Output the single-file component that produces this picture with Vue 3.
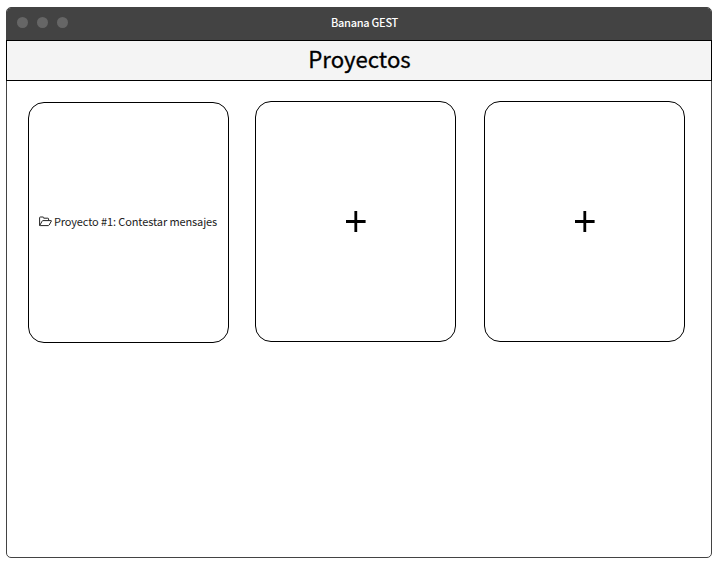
<script setup>
const dots = [1, 2, 3]
const projects = [
  { id: 1, name: 'Proyecto #1: Contestar mensajes' },
  { id: 2, name: null },
  { id: 3, name: null },
]
</script>

<template>
  <main class="window">
    <div class="titlebar">
      <div class="dots"><i v-for="d in dots" :key="d" class="dot"></i></div>
      <span class="app-name">Banana GEST</span>
    </div>
    <header class="heading"><h1>Proyectos</h1></header>
    <section class="cards">
      <article v-for="p in projects" :key="p.id" class="card">
        <div v-if="p.name" class="project">
          <svg class="folder" viewBox="0 0 13 11" width="13" height="11">
            <path d="M.6 9.5V1.7Q.6 1 1.3 1H4Q4.7 1 4.7 1.7V2.2H8.8Q9.6 2.2 9.6 3V4.6M.8 9.4 3.1 5.2Q3.4 4.6 4 4.6H12Q12.7 4.6 12.3 5.2L10.1 9.1Q9.7 9.6 9.2 9.6H1.3Q.6 9.6.6 9" />
          </svg>
          <span>{{ p.name }}</span>
        </div>
        <svg v-else class="plus" viewBox="0 0 20 21" width="20" height="21">
          <path d="M0 10.5H19.6M9.8 0V21" />
        </svg>
      </article>
    </section>
  </main>
</template>

<style>
body { background: #fff; }
</style>

<style scoped>
.window {
  box-sizing: border-box;
  width: 706px;
  height: 551px;
  margin: 7px 0 0 6px;
  border: 1px solid #434343;
  border-radius: 5px;
  background: #fff;
  color: #000;
  font-family: "Noto Sans CJK SC", "Noto Sans", sans-serif;
}
.titlebar {
  display: grid;
  grid-template-columns: 1fr auto 1fr;
  align-items: center;
  height: 32px;
  border-radius: 4px 4px 0 0;
  background: #434343;
}
.dots { display: flex; gap: 9px; padding: 0 0 4px 10px; }
.dot { width: 11px; height: 11px; border-radius: 50%; background: #666; }
.app-name {
  grid-column: 2;
  color: #fff;
  font-size: 11px;
  line-height: 16px;
  font-weight: 500;
  letter-spacing: -0.27px;
  padding: 0 0 4px 11px;
}
.heading {
  box-sizing: border-box;
  height: 41px;
  margin: 0 -1px;
  border: 1px solid #000;
  background: #f4f4f4;
  display: flex;
  justify-content: center;
  align-items: center;
}
h1 {
  margin: 0;
  padding: 0 0 5px 1px;
  font-size: 22.2px;
  line-height: 30px;
  font-weight: 400;
  -webkit-text-stroke: 0.3px #000;
}
.cards { display: flex; padding: 20px 0 0 21px; }
.card {
  box-sizing: border-box;
  width: 201px;
  height: 241px;
  border: 1px solid #000;
  border-radius: 16px;
  display: flex;
  align-items: center;
  justify-content: center;
}
.card:first-child { margin: 1px 26px 0 0; }
.card:last-child { margin-left: 28px; }
.project {
  display: flex;
  align-items: center;
  gap: 2px;
  padding: 0 1px 3px 0;
  color: #222;
  font-size: 11px;
  line-height: 16px;
  letter-spacing: -0.11px;
  white-space: nowrap;
}
.folder { fill: none; stroke: #222; stroke-width: 1; }
.plus { fill: none; stroke: #000; stroke-width: 2.8; }
</style>
